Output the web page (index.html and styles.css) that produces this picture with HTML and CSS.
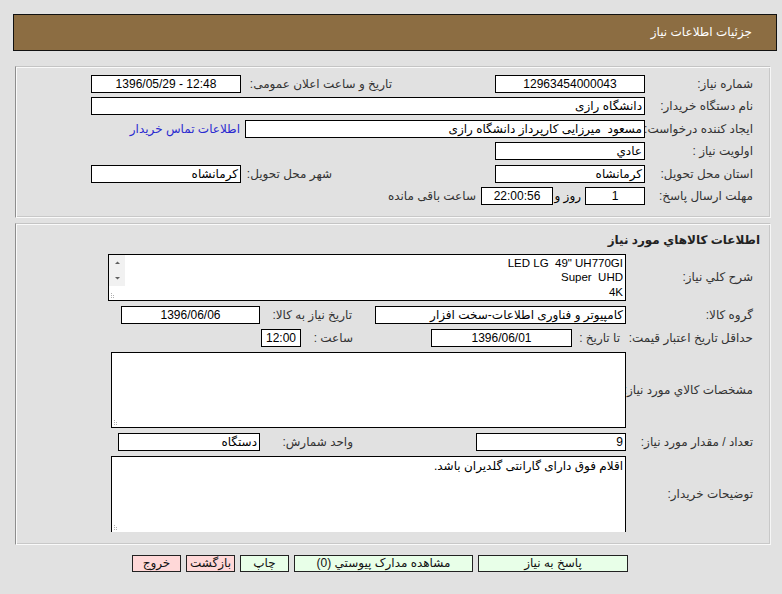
FILE: index.html
```html
<!DOCTYPE html>
<html dir="rtl" lang="fa">
<head>
<meta charset="utf-8">
<title>جزئیات اطلاعات نیاز</title>
<link rel="stylesheet" href="styles.css">
</head>
<body>
<div class="header">جزئیات اطلاعات نیاز</div>

<div class="panel panel-main">
  <div class="row">
    <div class="lbl">شماره نیاز:</div>
    <div class="field w150 c">12963454000043</div>
    <div class="sub sub-date">تاریخ و ساعت اعلان عمومی:</div>
    <div class="field w150 c ltr">1396/05/29 - 12:48</div>
  </div>
  <div class="row">
    <div class="lbl">نام دستگاه خریدار:</div>
    <div class="field w554">دانشگاه رازی</div>
  </div>
  <div class="row">
    <div class="lbl">ایجاد کننده درخواست:</div>
    <div class="field w400">مسعود&nbsp; میرزایی کارپرداز دانشگاه رازی</div>
    <a class="link" href="#">اطلاعات تماس خریدار</a>
  </div>
  <div class="row">
    <div class="lbl">اولویت نیاز :</div>
    <div class="field w150">عادي</div>
  </div>
  <div class="row">
    <div class="lbl">استان محل تحویل:</div>
    <div class="field w150">کرمانشاه</div>
    <div class="sub sub-city">شهر محل تحویل:</div>
    <div class="field w150">کرمانشاه</div>
  </div>
  <div class="row">
    <div class="lbl">مهلت ارسال پاسخ:</div>
    <div class="field w60 c">1</div>
    <div class="sub sub-day">روز و</div>
    <div class="field w72 c">22:00:56</div>
    <div class="remain">ساعت باقی مانده</div>
  </div>
</div>

<div class="panel panel-goods">
  <div class="row">
    <div class="title">اطلاعات کالاهاي مورد نیاز</div>
  </div>
  <div class="row row-area1">
    <div class="lbl lbl2">شرح کلي نیاز:</div>
    <div class="area area1">
      <div class="area-text ltr-lines">
        <div>LED LG&nbsp; 49" UH770GI</div>
        <div>Super&nbsp; UHD</div>
        <div>4K</div>
        <div>_</div>
      </div>
      <div class="scrollbar">
        <svg width="16" height="31" viewBox="0 0 16 31"><path d="M6 9 L8.5 6.5 L11 9 Z" fill="#606060"/><path d="M6 22 L8.5 24.5 L11 22 Z" fill="#606060"/></svg>
      </div>
      <svg class="grip" width="8" height="8" viewBox="0 0 8 8"><g fill="#b0b0b0"><rect x="1" y="6" width="1" height="1"/><rect x="3" y="6" width="1" height="1"/><rect x="1" y="4" width="1" height="1"/><rect x="3" y="4" width="1" height="1"/><rect x="1" y="2" width="1" height="1"/></g></svg>
    </div>
  </div>
  <div class="row">
    <div class="lbl lbl2">گروه کالا:</div>
    <div class="field w251">کامپیوتر و فناوری اطلاعات-سخت افزار</div>
    <div class="sub sub-need">تاریخ نیاز به کالا:</div>
    <div class="field w139 c">1396/06/06</div>
  </div>
  <div class="row">
    <div class="lbl lbl2">حداقل تاریخ اعتبار قیمت:</div>
    <div class="sub sub-until">تا تاریخ :</div>
    <div class="field w141 c">1396/06/01</div>
    <div class="sub sub-hour">ساعت :</div>
    <div class="field w40 c">12:00</div>
  </div>
  <div class="row row-area2">
    <div class="lbl lbl2">مشخصات کالاي مورد نیاز:</div>
    <div class="area area2">
      <svg class="grip" width="8" height="8" viewBox="0 0 8 8"><g fill="#b0b0b0"><rect x="1" y="6" width="1" height="1"/><rect x="3" y="6" width="1" height="1"/><rect x="1" y="4" width="1" height="1"/><rect x="3" y="4" width="1" height="1"/><rect x="1" y="2" width="1" height="1"/></g></svg>
    </div>
  </div>
  <div class="row">
    <div class="lbl lbl2">تعداد / مقدار مورد نیاز:</div>
    <div class="field w150">9</div>
    <div class="sub sub-unit">واحد شمارش:</div>
    <div class="field w142">دستگاه</div>
  </div>
  <div class="row row-area3">
    <div class="lbl lbl2">توضیحات خریدار:</div>
    <div class="area area3">
      <div class="area-text">اقلام فوق دارای گارانتی گلدیران باشد.</div>
      <svg class="grip" width="8" height="8" viewBox="0 0 8 8"><g fill="#b0b0b0"><rect x="1" y="6" width="1" height="1"/><rect x="3" y="6" width="1" height="1"/><rect x="1" y="4" width="1" height="1"/><rect x="3" y="4" width="1" height="1"/><rect x="1" y="2" width="1" height="1"/></g></svg>
    </div>
  </div>
</div>

<div class="buttons">
  <button class="btn green w150">پاسخ به نیاز</button>
  <button class="btn green w179">مشاهده مدارک پیوستي (0)</button>
  <button class="btn green w49">چاپ</button>
  <button class="btn pink w49">بازگشت</button>
  <button class="btn pink w49">خروج</button>
</div>
</body>
</html>
```

FILE: styles.css
```css
* { box-sizing: border-box; }

body {
  margin: 0;
  background: #e1e1e1;
  font-family: "Liberation Sans", "DejaVu Sans", sans-serif;
  font-size: 12px;
  color: #333;
}

.header {
  margin: 14px 5px 0 13px;
  height: 37px;
  background: #8c6d42;
  border: 1px solid #111;
  color: #fff;
  padding-right: 24px;
  line-height: 35px;
  font-size: 12px;
}

.panel {
  margin: 0 11px 0 15px;
  border-top: 1px solid #c4c4c4;
  border-left: 1px solid #8e8e8e;
  border-right: 1px solid #f6f6f6;
  border-bottom: 1px solid #fafafa;
  box-shadow: inset 1px 1px 0 #fafafa, inset -1px -1px 0 #c8c8c8;
  display: flex;
  flex-direction: column;
}

.panel-main {
  margin-top: 15px;
  padding: 8px 0 12px;
  gap: 4.4px;
}

.panel-goods {
  margin-top: 5px;
  padding: 7px 0 12px;
  gap: 5px;
}

.row {
  display: flex;
  align-items: center;
  height: 18px;
  white-space: nowrap;
}

.lbl {
  flex: none;
  width: 125px;
  padding-right: 17px;
}

.lbl2 {
  width: 144px;
}

.field {
  flex: none;
  height: 18px;
  background: #fff;
  border: 1px solid #000;
  line-height: 16px;
  padding: 0 2px;
  color: #000;
}

.c { text-align: center; }
.ltr { direction: ltr; }

.w40 { width: 40px; }
.w60 { width: 60px; }
.w72 { width: 72px; }
.w139 { width: 139px; }
.w141 { width: 141px; }
.w142 { width: 142px; }
.w150 { width: 150px; }
.w251 { width: 251px; }
.w400 { width: 400px; }
.w554 { width: 554px; }

.sub { flex: none; }
.sub-date { width: 254px; padding-right: 103px; }
.sub-city { width: 254px; padding-right: 163px; }
.sub-day { width: 32px; padding-right: 4px; color: #000; }
.sub-need { width: 115px; padding-right: 23px; }
.sub-until { width: 54px; padding-right: 6px; }
.sub-hour { width: 130px; padding-right: 78px; }
.sub-unit { width: 216px; padding-right: 123px; }

.remain { margin-right: 5px; }

.link {
  margin-right: 5px;
  color: #2a2ad0;
  text-decoration: none;
}

.title {
  padding-right: 10px;
  font-weight: bold;
  font-size: 12px;
  color: #222;
}

.row-area1 { height: 47px; }
.row-area2 { height: 76px; }
.row-area3 { height: 76px; }

.area {
  flex: none;
  position: relative;
  background: #fff;
  border: 1px solid #000;
  color: #000;
}

.area1 { width: 518px; height: 47px; display: flex; overflow: hidden; }
.area2 { width: 515px; height: 76px; }
.area3 { width: 515px; height: 76px; border-bottom: none; }

.area-text {
  padding: 2px 2px 0;
  line-height: 15px;
}

.area1 .area-text {
  flex: 1;
  padding-top: 1px;
  font-size: 11.5px;
  line-height: 14.5px;
}

.scrollbar {
  flex: none;
  width: 16px;
  height: 31px;
  background: #f1f1f1;
}

.scrollbar svg { display: block; }

.grip {
  position: absolute;
  left: 1px;
  bottom: 1px;
}

.buttons {
  display: flex;
  gap: 5px;
  margin-top: 10px;
  padding-right: 154px;
}

.btn {
  flex: none;
  height: 17px;
  border: 1px solid #222;
  font-family: "Liberation Sans", "DejaVu Sans", sans-serif;
  font-size: 12px;
  line-height: 15px;
  padding: 0;
  color: #111;
  white-space: nowrap;
  overflow: visible;
}

.green { background: #e8ffe8; }
.pink { background: #ffd8d8; }
.w49 { width: 49px; }
.w179 { width: 179px; }
```
